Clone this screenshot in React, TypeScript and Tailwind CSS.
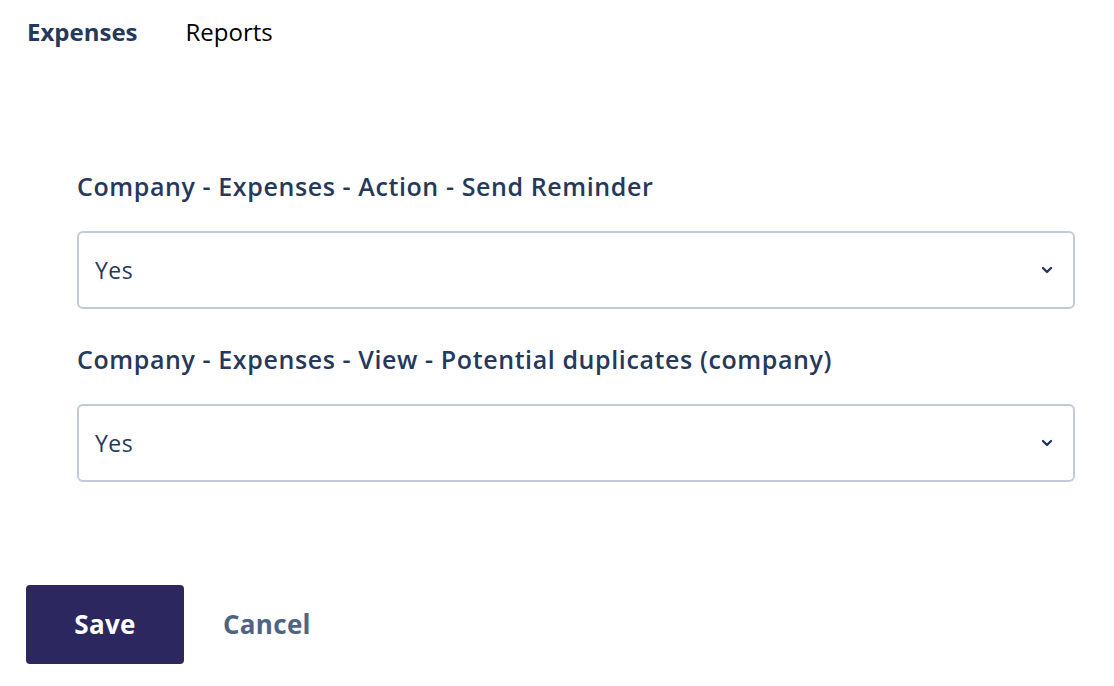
import { useState } from "react";

const FIELDS = [
  "Company - Expenses - Action - Send Reminder",
  "Company - Expenses - View - Potential duplicates (company)",
];

function Chevron() {
  return (
    <svg className="w-[12px] h-[8px]" viewBox="0 0 12 8" fill="none">
      <path d="M2 2l4 4 4-4" stroke="#26395c" strokeWidth={2.4} strokeLinecap="round" strokeLinejoin="round" />
    </svg>
  );
}

export default function App() {
  const [tab, setTab] = useState("expenses");

  return (
    <div className="w-[1114px] h-[686px] bg-white font-['Open_Sans',sans-serif] relative">
      {/* Tabs */}
      <div className="flex items-center gap-[48px] pl-[27px] pt-[16px] h-[48px]">
        <button
          onClick={() => setTab("expenses")}
          className={`text-[24px] leading-none ${tab === "expenses" ? "font-bold text-[#26395c]" : "text-black"}`}
        >
          Expenses
        </button>
        <button
          onClick={() => setTab("reports")}
          className={`text-[24px] leading-none ${tab === "reports" ? "font-bold text-[#26395c]" : "text-black"}`}
        >
          Reports
        </button>
      </div>

      {/* Form */}
      <div className="pl-[77px] pr-[39px] pt-[122px] flex flex-col">
        {FIELDS.map((label, i) => (
          <div key={label} className={`flex flex-col ${i > 0 ? "mt-[34px]" : ""}`}>
            <label className="text-[25px] leading-[32px] tracking-[0.6px] font-semibold text-[#26395c] h-[32px]">
              {label}
            </label>
            <div className="mt-[29px] h-[78px] border-2 border-[#c2cad7] rounded-[6px] flex items-center justify-between pl-[16px] pr-[20px]">
              <span className="text-[23px] tracking-[0.5px] text-[#26395c]">Yes</span>
              <Chevron />
            </div>
          </div>
        ))}
      </div>

      {/* Actions */}
      <div className="flex items-center pl-[26px] mt-[103px]">
        <button className="w-[158px] h-[79px] bg-[#2d2760] rounded-[4px] text-white text-[26px] tracking-[0.3px] font-bold">
          Save
        </button>
        <button className="ml-[39px] text-[26px] tracking-[0.3px] font-bold text-[#4f6485]">Cancel</button>
      </div>
    </div>
  );
}
